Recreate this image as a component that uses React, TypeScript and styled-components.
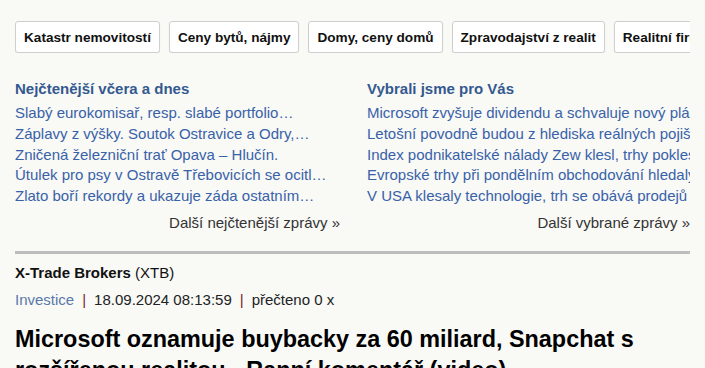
import React from 'react'
import styled, {createGlobalStyle} from 'styled-components'

const GlobalStyle = createGlobalStyle`
    html, body {
        margin: 0;
        padding: 0;
        background: #f9f9f6;
        font-family: "Liberation Sans", Arial, sans-serif;
        color: #111;
    }
`

const Page = styled.div`
    width: 675px;
    margin: 0 15px;
    overflow: hidden;
`

const Tabs = styled.nav`
    display: flex;
    gap: 9px;
    margin-top: 21px;
    overflow: hidden;
    white-space: nowrap;
`

const Tab = styled.a`
    flex: none;
    display: flex;
    align-items: center;
    height: 30px;
    padding: 0 8px;
    background: #fff;
    border: 1px solid #cfcfcf;
    border-radius: 3px;
    box-shadow: 0 1px 1px rgba(0, 0, 0, 0.08);
    font-size: 13.6px;
    font-weight: 700;
    color: #111;
    text-decoration: none;
`

const Columns = styled.div`
    display: grid;
    grid-template-columns: 325px 323px;
    gap: 27px;
    margin-top: 25px;
`

const Column = styled.section`
    overflow: hidden;
`

const ColumnTitle = styled.h3`
    margin: 0 0 3px;
    font-size: 15px;
    line-height: 22px;
    font-weight: 700;
    color: #34598f;
`

const LinkList = styled.ul`
    list-style: none;
    margin: 0;
    padding: 0;
`

const NewsLink = styled.li`
    font-size: 15px;
    line-height: 20.8px;
    color: #3862a8;
    white-space: nowrap;
`

const More = styled.div`
    margin-top: 5px;
    text-align: right;
    font-size: 15px;
    line-height: 22px;
    color: #333;
`

const Rule = styled.hr`
    margin: 17px 0 0;
    border: none;
    height: 3px;
    background: #bdbdbd;
`

const Source = styled.div`
    margin-top: 9px;
    font-size: 15px;
    line-height: 20px;
    color: #111;

    b {
        font-weight: 700;
    }
`

const Meta = styled.div`
    display: flex;
    gap: 8px;
    margin-top: 6px;
    font-size: 15px;
    line-height: 22px;
    color: #222;
`

const Category = styled.span`
    color: #5a78aa;
`

const Sep = styled.span`
    color: #7a1e2e;
`

const Headline = styled.h1`
    margin: 13px 0 0;
    font-size: 23.4px;
    line-height: 31px;
    font-weight: 700;
    color: #000;
`

const tabs = ['Katastr nemovitostí', 'Ceny bytů, nájmy', 'Domy, ceny domů', 'Zpravodajství z realit', 'Realitní firmy']

const mostRead = [
    'Slabý eurokomisař, resp. slabé portfolio…',
    'Záplavy z výšky. Soutok Ostravice a Odry,…',
    'Zničená železniční trať Opava – Hlučín.',
    'Útulek pro psy v Ostravě Třebovicích se ocitl…',
    'Zlato boří rekordy a ukazuje záda ostatním…',
]

const picked = [
    'Microsoft zvyšuje dividendu a schvaluje nový plán zpětného odkupu',
    'Letošní povodně budou z hlediska reálných pojišťoven drahé',
    'Index podnikatelské nálady Zew klesl, trhy poklesly',
    'Evropské trhy při pondělním obchodování hledaly směr',
    'V USA klesaly technologie, trh se obává prodejů',
]

const NewsColumn = ({title, items, more}: {title: string; items: string[]; more: string}) => (
    <Column>
        <ColumnTitle>{title}</ColumnTitle>
        <LinkList>
            {items.map(item => (
                <NewsLink key={item}>{item}</NewsLink>
            ))}
        </LinkList>
        <More>{more}</More>
    </Column>
)

export default function App() {
    return (
        <>
            <GlobalStyle />
            <Page>
                <Tabs>
                    {tabs.map(t => (
                        <Tab key={t}>{t}</Tab>
                    ))}
                </Tabs>
                <Columns>
                    <NewsColumn title='Nejčtenější včera a dnes' items={mostRead} more='Další nejčtenější zprávy »' />
                    <NewsColumn title='Vybrali jsme pro Vás' items={picked} more='Další vybrané zprávy »' />
                </Columns>
                <Rule />
                <Source>
                    <b>X-Trade Brokers</b> (XTB)
                </Source>
                <Meta>
                    <Category>Investice</Category>
                    <Sep>|</Sep>
                    <span>18.09.2024 08:13:59</span>
                    <Sep>|</Sep>
                    <span>přečteno 0 x</span>
                </Meta>
                <Headline>
                    Microsoft oznamuje buybacky za 60 miliard, Snapchat s rozšířenou realitou - Ranní komentář (video)
                </Headline>
            </Page>
        </>
    )
}
